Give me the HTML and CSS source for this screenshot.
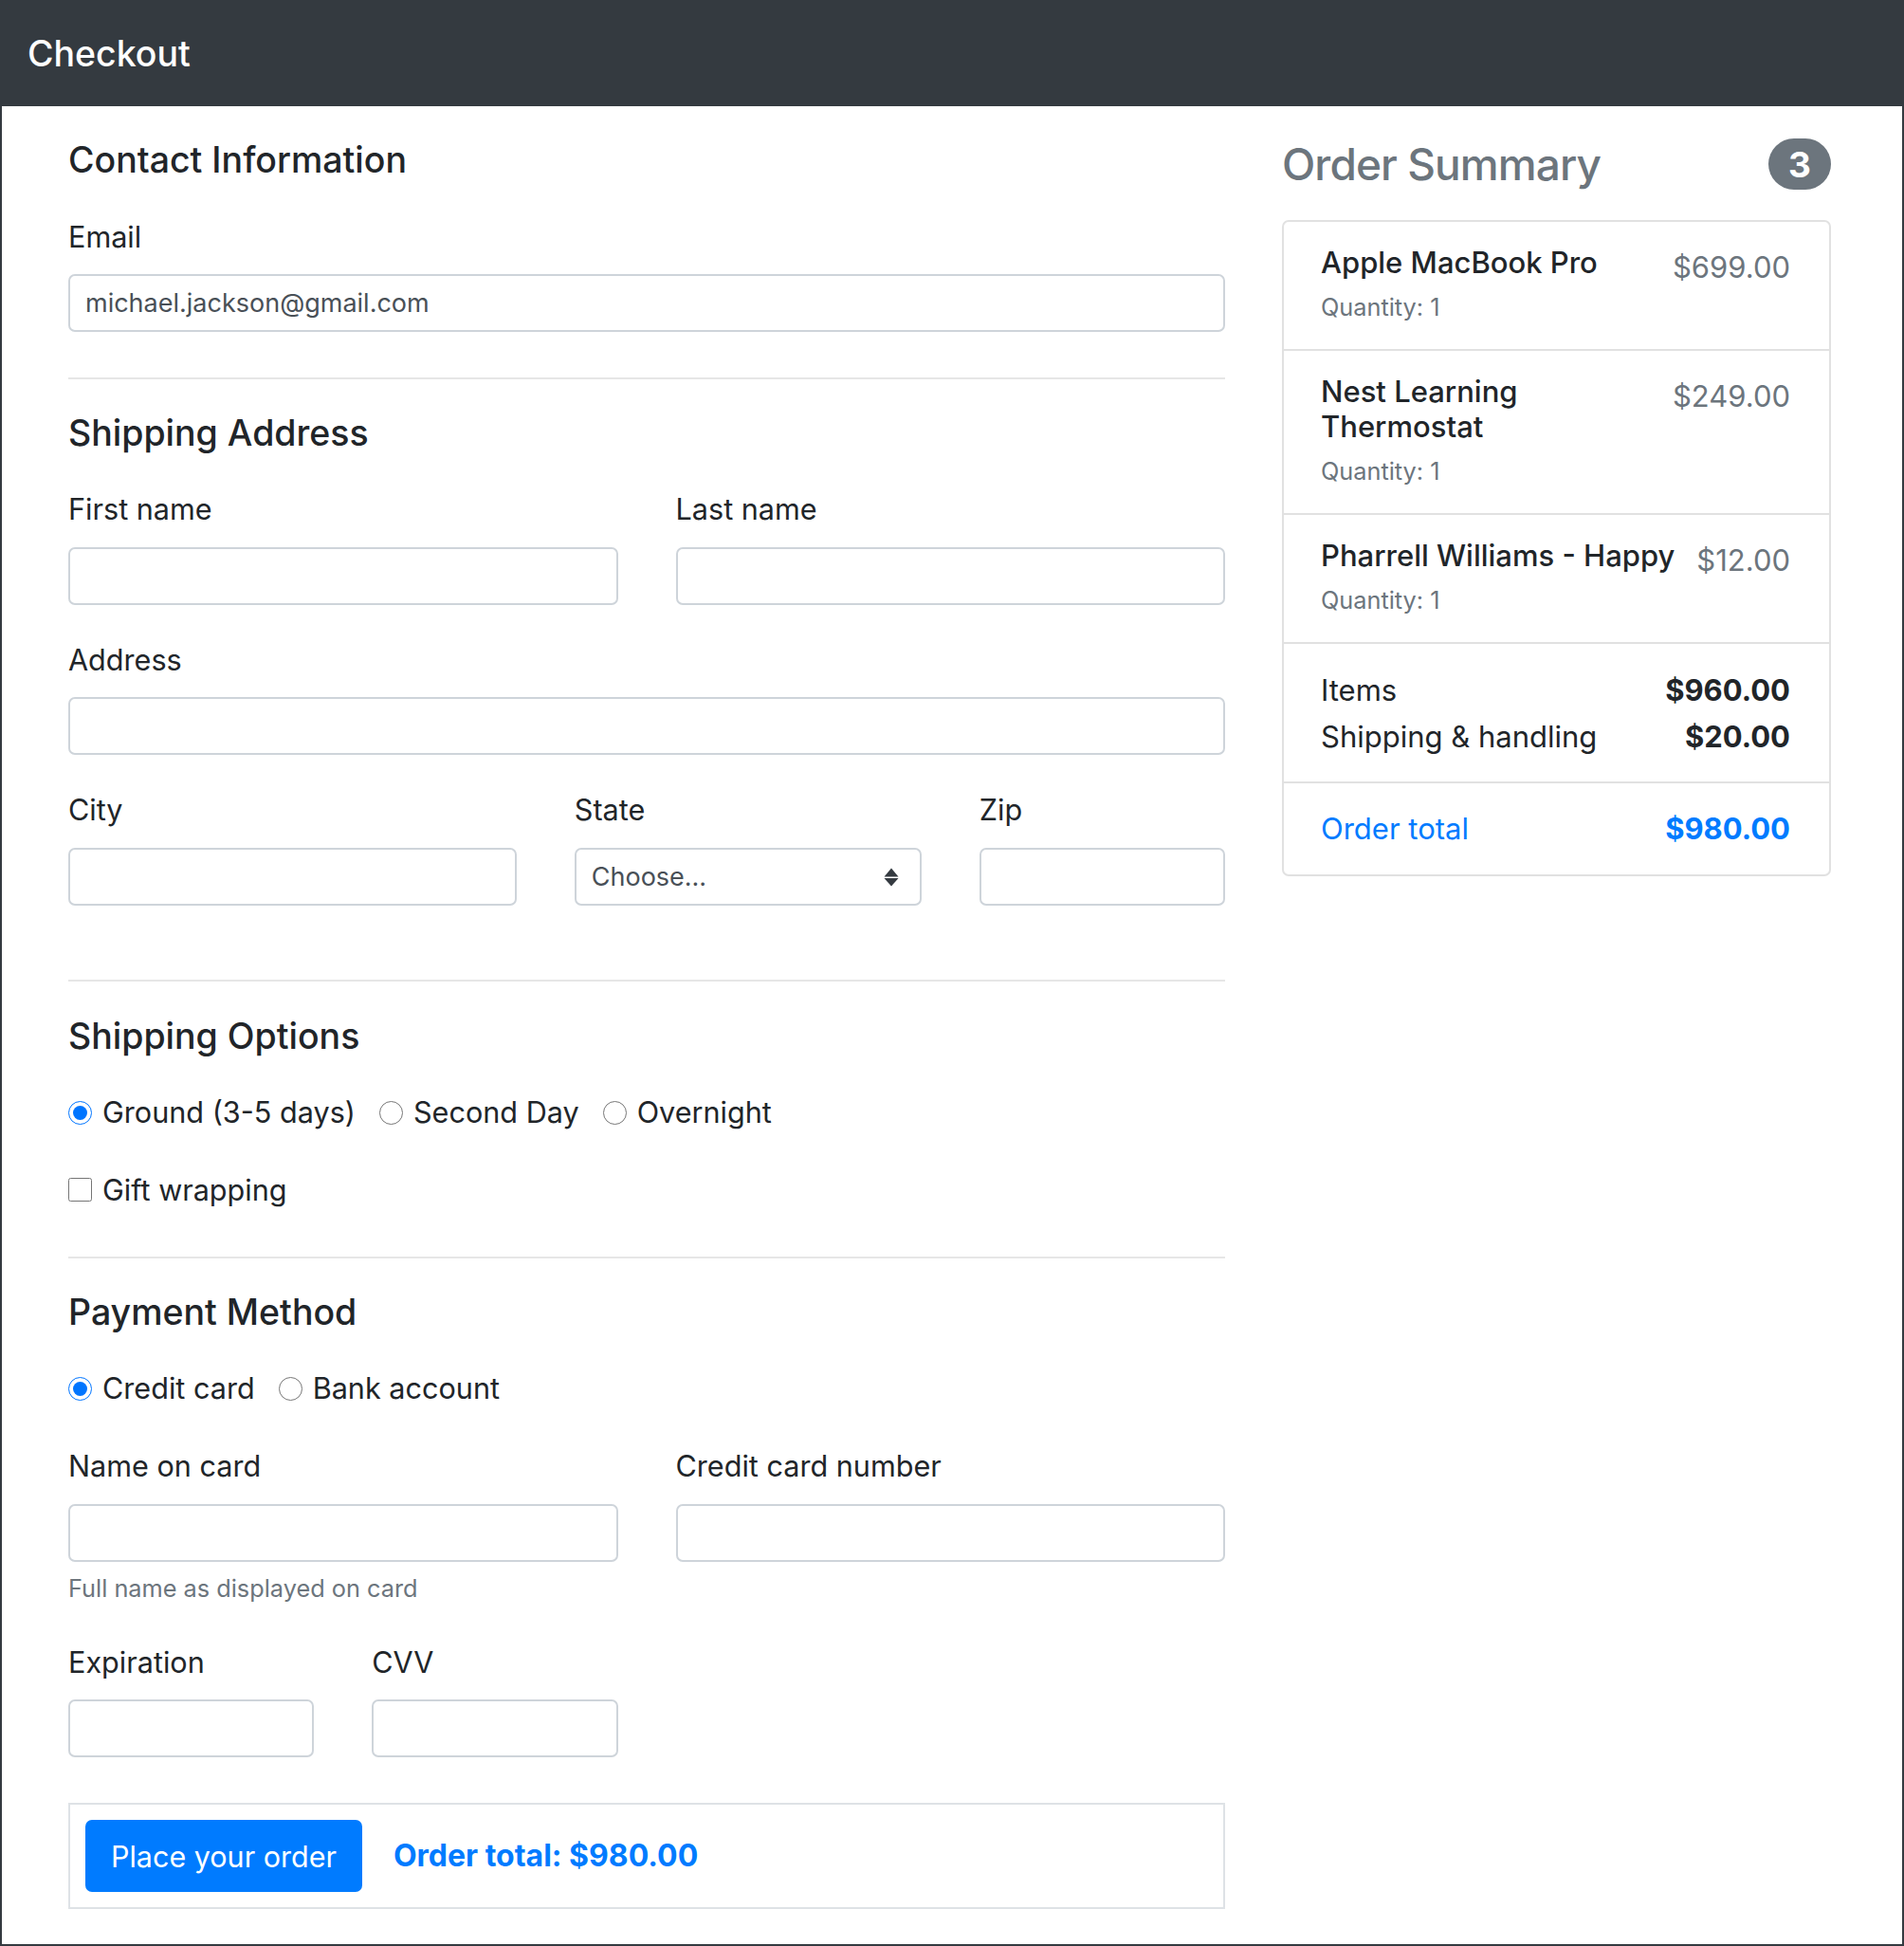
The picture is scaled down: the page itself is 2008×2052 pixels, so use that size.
FILE: index.html
```html
<!DOCTYPE html>
<html lang="en">
<head>
<meta charset="utf-8">
<title>Checkout</title>
<link rel="stylesheet" href="styles.css">
</head>
<body>
<div class="page">
  <header class="topbar"><span class="brand">Checkout</span></header>
  <main class="layout">
    <form class="checkout-form">
      <section class="section">
        <h2 class="section-title">Contact Information</h2>
        <div class="field">
          <label class="field-label" for="email">Email</label>
          <input class="control" id="email" type="email" value="michael.jackson@gmail.com">
        </div>
      </section>
      <hr class="divider">
      <section class="section section-address">
        <h2 class="section-title">Shipping Address</h2>
        <div class="grid">
          <div class="field span-6">
            <label class="field-label" for="first">First name</label>
            <input class="control" id="first" type="text">
          </div>
          <div class="field span-6">
            <label class="field-label" for="last">Last name</label>
            <input class="control" id="last" type="text">
          </div>
          <div class="field span-12">
            <label class="field-label" for="address">Address</label>
            <input class="control" id="address" type="text">
          </div>
          <div class="field span-5">
            <label class="field-label" for="city">City</label>
            <input class="control" id="city" type="text">
          </div>
          <div class="field span-4">
            <label class="field-label" for="state">State</label>
            <div class="select-wrap">
              <select class="control select" id="state">
                <option>Choose...</option>
              </select>
              <svg class="select-arrows" viewBox="0 0 16 20" aria-hidden="true">
                <path d="M8 0.5 L15.5 9.5 L0.5 9.5 Z" fill="#343a40"/>
                <path d="M0.5 11 L15.5 11 L8 19.5 Z" fill="#343a40"/>
              </svg>
            </div>
          </div>
          <div class="field span-3">
            <label class="field-label" for="zip">Zip</label>
            <input class="control" id="zip" type="text">
          </div>
        </div>
      </section>
      <hr class="divider">
      <section class="section section-options">
        <h2 class="section-title">Shipping Options</h2>
        <div class="options">
          <label class="option"><input type="radio" name="ship" checked><span>Ground (3-5 days)</span></label>
          <label class="option"><input type="radio" name="ship"><span>Second Day</span></label>
          <label class="option"><input type="radio" name="ship"><span>Overnight</span></label>
        </div>
        <div class="options options-gift">
          <label class="option"><input type="checkbox"><span>Gift wrapping</span></label>
        </div>
      </section>
      <hr class="divider">
      <section class="section">
        <h2 class="section-title">Payment Method</h2>
        <div class="options">
          <label class="option"><input type="radio" name="pay" checked><span>Credit card</span></label>
          <label class="option"><input type="radio" name="pay"><span>Bank account</span></label>
        </div>
        <div class="grid grid-payment">
          <div class="field span-6">
            <label class="field-label" for="cc-name">Name on card</label>
            <input class="control" id="cc-name" type="text">
            <small class="help-text">Full name as displayed on card</small>
          </div>
          <div class="field span-6">
            <label class="field-label" for="cc-number">Credit card number</label>
            <input class="control" id="cc-number" type="text">
          </div>
          <div class="field span-3">
            <label class="field-label" for="cc-exp">Expiration</label>
            <input class="control" id="cc-exp" type="text">
          </div>
          <div class="field span-3">
            <label class="field-label" for="cc-cvv">CVV</label>
            <input class="control" id="cc-cvv" type="text">
          </div>
        </div>
      </section>
      <div class="place-order">
        <button class="btn-primary" type="button">Place your order</button>
        <span class="order-total-inline">Order total: $980.00</span>
      </div>
    </form>

    <aside class="summary">
      <div class="summary-head">
        <h2 class="summary-title">Order Summary</h2>
        <span class="badge">3</span>
      </div>
      <ul class="cart">
        <li class="cart-row cart-item">
          <div class="item-info">
            <h3 class="item-name">Apple MacBook Pro</h3>
            <small class="item-qty">Quantity: 1</small>
          </div>
          <span class="item-price">$699.00</span>
        </li>
        <li class="cart-row cart-item">
          <div class="item-info">
            <h3 class="item-name">Nest Learning<br>Thermostat</h3>
            <small class="item-qty">Quantity: 1</small>
          </div>
          <span class="item-price">$249.00</span>
        </li>
        <li class="cart-row cart-item">
          <div class="item-info">
            <h3 class="item-name">Pharrell Williams - Happy</h3>
            <small class="item-qty">Quantity: 1</small>
          </div>
          <span class="item-price">$12.00</span>
        </li>
        <li class="cart-row cart-totals">
          <div class="total-row"><span>Items</span><strong>$960.00</strong></div>
          <div class="total-row"><span>Shipping &amp; handling</span><strong>$20.00</strong></div>
        </li>
        <li class="cart-row cart-grand">
          <div class="total-row"><span>Order total</span><strong>$980.00</strong></div>
        </li>
      </ul>
    </aside>
  </main>
</div>
</body>
</html>
```
FILE: styles.css
```css
* { box-sizing: border-box; }

html, body {
  margin: 0;
  padding: 0;
}

body {
  font-family: Inter, "Noto Sans", "Liberation Sans", sans-serif;
  font-size: 30.6px;
  line-height: 1.5;
  color: #212529;
  background: #fff;
}

.page {
  min-height: 2052px;
  border: 2px solid #343a40;
}

.topbar {
  height: 110px;
  background: #343a40;
  display: flex;
  align-items: center;
  padding-left: 27px;
}

.brand {
  color: #fff;
  font-size: 37.5px;
  font-weight: 500;
  line-height: 1.2;
  margin-top: -1px;
}

.layout {
  display: grid;
  grid-template-columns: 1220px 579px;
  column-gap: 60px;
  align-items: start;
  padding: 34px 0 0 70px;
}

.section-title {
  margin: 0 0 36px;
  font-size: 37.5px;
  font-weight: 500;
  line-height: 45.6px;
}

.field-label {
  display: block;
  margin-bottom: 18px;
  line-height: 43.5px;
}

.control {
  display: block;
  width: 100%;
  height: 61px;
  padding: 0 16px;
  border: 2px solid #ced4da;
  border-radius: 7px;
  font-family: inherit;
  font-size: 27px;
  color: #495057;
  background: #fff;
}

.divider {
  border: 0;
  border-top: 2px solid #e6e6e6;
  margin: 48px 0 33.5px;
}

.grid {
  display: grid;
  grid-template-columns: repeat(12, minmax(0, 1fr));
  column-gap: 61px;
  row-gap: 36px;
}

.span-3 { grid-column: span 3; }
.span-4 { grid-column: span 4; }
.span-5 { grid-column: span 5; }
.span-6 { grid-column: span 6; }
.span-12 { grid-column: span 12; }

.section-address {
  padding-bottom: 30.5px;
}

.section-options {
  padding-top: 1px;
  padding-bottom: 1px;
}

.select-wrap {
  position: relative;
}

.select {
  -webkit-appearance: none;
  appearance: none;
  padding-right: 56px;
}

.select-arrows {
  position: absolute;
  right: 24px;
  top: 21px;
  width: 16px;
  height: 20px;
  pointer-events: none;
}

.options {
  display: flex;
  align-items: center;
  gap: 25px;
  line-height: 43.5px;
}

.options-gift {
  margin-top: 38px;
}

.option {
  display: inline-flex;
  align-items: center;
  gap: 11px;
}

.option input {
  width: 25px;
  height: 25px;
  margin: 0;
}

.grid-payment {
  margin-top: 38.5px;
  row-gap: 38px;
}

.help-text {
  display: block;
  margin-top: 10px;
  font-size: 25.3px;
  line-height: 36px;
  color: #6c757d;
}

.place-order {
  margin-top: 48px;
  display: flex;
  align-items: center;
  gap: 33px;
  padding: 16px;
  border: 2px solid #dee2e6;
}

.btn-primary {
  height: 76px;
  padding: 0 27px;
  border: 0;
  border-radius: 7px;
  background: #007bff;
  color: #fff;
  font-family: inherit;
  font-size: 30.5px;
  line-height: 1.5;
}

.order-total-inline {
  color: #007bff;
  font-size: 32px;
  font-weight: 700;
}

.summary-head {
  display: flex;
  justify-content: space-between;
  align-items: center;
  height: 54px;
  margin-bottom: 32px;
}

.summary-title {
  margin: 0;
  font-size: 46px;
  font-weight: 500;
  letter-spacing: -0.9px;
  line-height: 54px;
  color: #6c757d;
}

.badge {
  display: inline-flex;
  align-items: center;
  justify-content: center;
  height: 54px;
  min-width: 66px;
  padding: 0 21px;
  border-radius: 27px;
  background: #6c757d;
  color: #fff;
  font-size: 37px;
  font-weight: 700;
  line-height: 1;
}

.cart {
  list-style: none;
  margin: 0;
  padding: 0;
  border: 2px solid #e1e1e1;
  border-radius: 7px;
  font-size: 31px;
}

.cart-row + .cart-row {
  border-top: 2px solid #e1e1e1;
}

.cart-item {
  display: flex;
  justify-content: space-between;
  align-items: flex-start;
  gap: 16px;
  padding: 24px 41px 26px 39px;
}

.item-name {
  margin: 0;
  font-size: 31px;
  font-weight: 500;
  line-height: 37.7px;
  white-space: nowrap;
}

.item-qty {
  display: block;
  margin-top: 10px;
  font-size: 25.3px;
  line-height: 36px;
  color: #6c757d;
}

.item-price {
  margin-top: 2px;
  line-height: 43.5px;
  color: #6c757d;
  white-space: nowrap;
}

.cart-totals {
  display: flex;
  flex-direction: column;
  gap: 5.5px;
  padding: 27px 41px 26px 39px;
}

.total-row {
  display: flex;
  justify-content: space-between;
  line-height: 43.5px;
}

.total-row strong {
  font-weight: 700;
}

.cart-grand {
  padding: 26px 41px 26.5px 39px;
  color: #007bff;
}
```
